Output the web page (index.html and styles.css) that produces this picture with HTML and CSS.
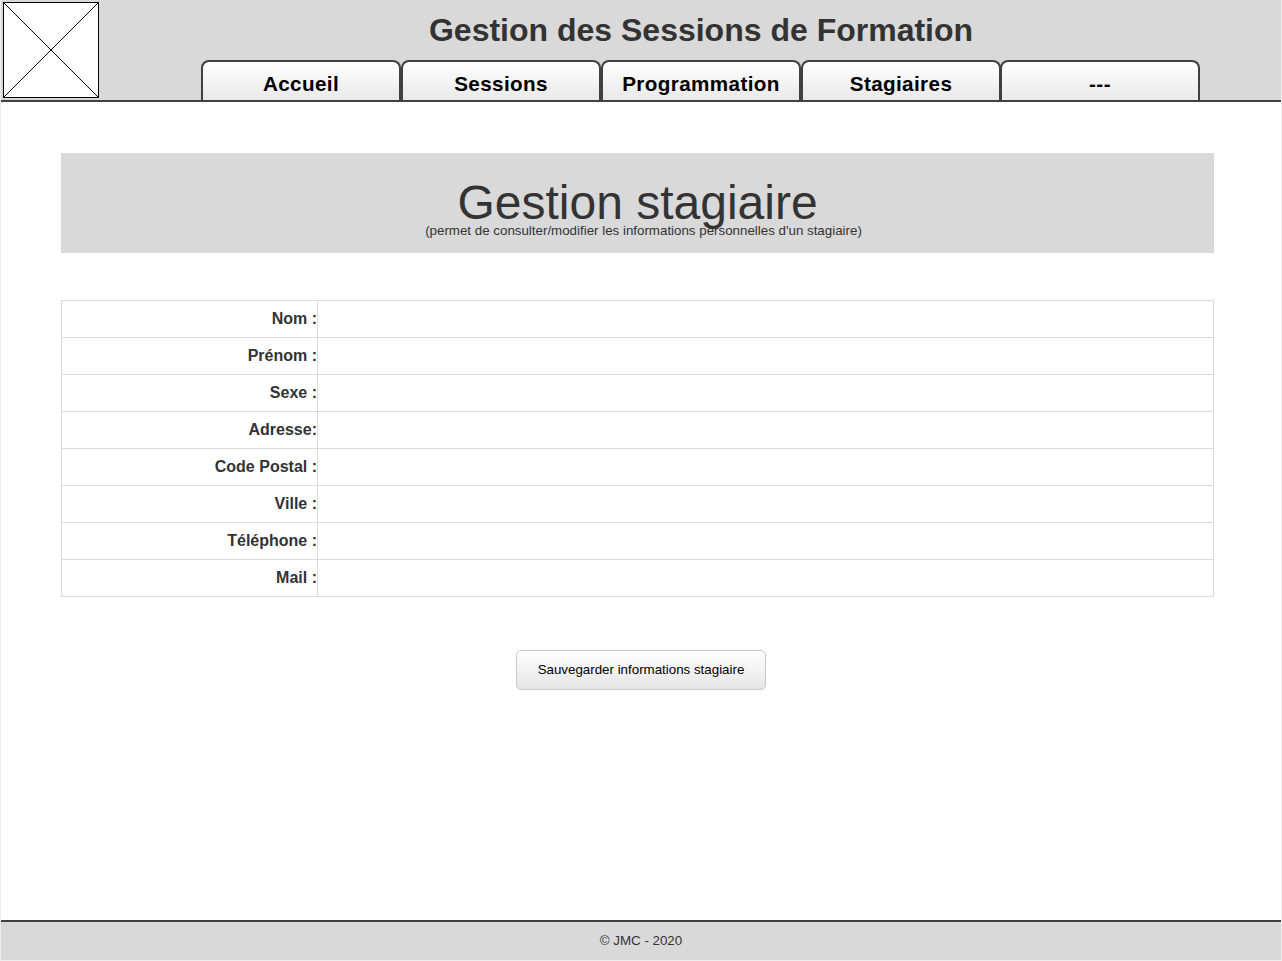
FILE: index.html
```html
<!DOCTYPE html>
<html lang="fr">
<head>
<meta charset="utf-8">
<title>Gestion des Sessions de Formation</title>
<link rel="stylesheet" href="styles.css">
</head>
<body>
<div class="page">
  <header class="header">
    <svg class="logo" width="96" height="96" viewBox="0 0 96 96"><rect x=".5" y=".5" width="95" height="95" fill="#fff" stroke="#000"/><path d="M.5 .5L95.5 95.5M95.5 .5L.5 95.5" stroke="#000"/></svg>
    <div class="brand">
      <h1 class="title">Gestion des Sessions de Formation</h1>
      <nav class="tabs">
        <a class="tab">Accueil</a>
        <a class="tab">Sessions</a>
        <a class="tab">Programmation</a>
        <a class="tab">Stagiaires</a>
        <a class="tab tab-last">---</a>
      </nav>
    </div>
  </header>
  <main class="main">
    <section class="banner">
      <h2 class="banner-title">Gestion stagiaire</h2>
      <p class="banner-note">(permet de consulter/modifier les informations personnelles d'un stagiaire)</p>
    </section>
    <table class="form">
      <tr><th>Nom :</th><td></td></tr>
      <tr><th>Prénom :</th><td></td></tr>
      <tr><th>Sexe :</th><td></td></tr>
      <tr><th>Adresse:</th><td></td></tr>
      <tr><th>Code Postal :</th><td></td></tr>
      <tr><th>Ville :</th><td></td></tr>
      <tr><th>Téléphone :</th><td></td></tr>
      <tr><th>Mail :</th><td></td></tr>
    </table>
    <button class="save">Sauvegarder informations stagiaire</button>
  </main>
  <footer class="footer">© JMC - 2020</footer>
</div>
</body>
</html>
```

FILE: styles.css
```css
* { box-sizing: border-box; }
body {
  margin: 0;
  background: #fff;
  color: #333;
  font-family: "Liberation Sans", Arial, sans-serif;
}
.page {
  display: flex;
  flex-direction: column;
  height: 961px;
  border: 1px solid #eee;
  border-top: 0;
}
.header {
  display: flex;
  height: 102px;
  background: #d9d9d9;
  border-bottom: 2px solid #404040;
}
.logo { margin: 2px 0 0 2px; }
.brand {
  display: flex;
  flex-direction: column;
  width: 1000px;
  margin-left: 102px;
}
.title {
  height: 60px;
  margin: 0;
  font-size: 32px;
  line-height: 60px;
  text-align: center;
}
.tabs { display: flex; height: 40px; }
.tab {
  width: 200px;
  padding-top: 6px;
  border: 2px solid #404040;
  border-bottom: 0;
  border-radius: 8px 8px 0 0;
  background: linear-gradient(#fff, #e9e9e9);
  color: #000;
  font-size: 20.67px;
  font-weight: bold;
  letter-spacing: .38px;
  line-height: 32px;
  text-align: center;
}
.tab-last { margin-left: -1px; }
.main {
  flex: 1;
  display: flex;
  flex-direction: column;
  padding: 51px 67px 0 60px;
}
.banner {
  height: 100px;
  padding-top: 23px;
  background: #d9d9d9;
  text-align: center;
}
.banner-title {
  margin: 0;
  font-size: 48px;
  font-weight: normal;
  line-height: 54px;
}
.banner-note {
  margin: -7px 0 0;
  padding-left: 12px;
  font-size: 13.33px;
  line-height: 15px;
}
.form {
  width: 1153px;
  margin-top: 47px;
  border-collapse: collapse;
  table-layout: fixed;
}
.form th, .form td {
  height: 37px;
  padding: 0;
  border: 1px solid #dadada;
}
.form th { width: 256px; font-size: 16px; text-align: right; }
.save {
  width: 250px;
  height: 40px;
  margin: 53px 0 0 455px;
  padding: 0 0 2px;
  border: 1px solid #c8c8c8;
  border-radius: 5px;
  background: linear-gradient(#fff, #e5e5e5);
  color: #000;
  font: 13.33px "Liberation Sans", Arial, sans-serif;
}
.footer {
  height: 40px;
  border-top: 2px solid #404040;
  background: #d9d9d9;
  font-size: 13.33px;
  line-height: 37px;
  text-align: center;
}
```
